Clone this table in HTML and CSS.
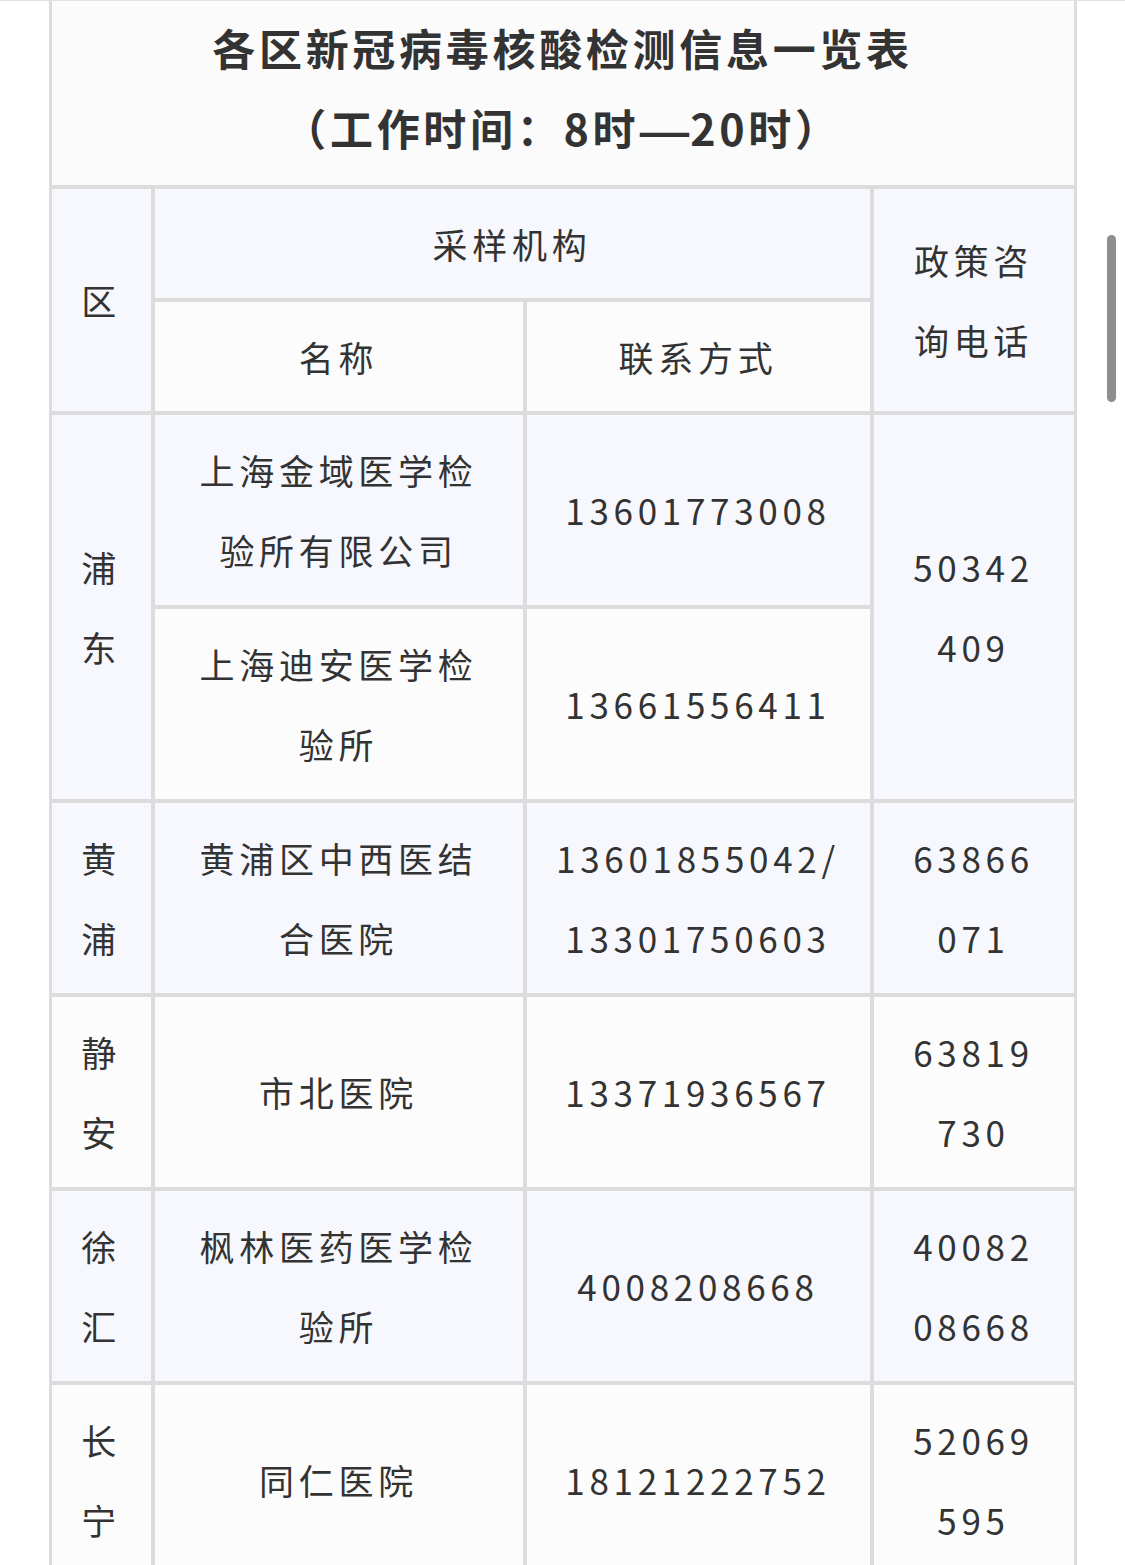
FILE: index.html
```html
<!DOCTYPE html>
<html lang="zh-CN">
<head>
<meta charset="utf-8">
<title>各区新冠病毒核酸检测信息一览表</title>
<link rel="stylesheet" href="styles.css">
</head>
<body>
<div class="page">
  <table class="info-table">
    <colgroup>
      <col class="col-district">
      <col class="col-name">
      <col class="col-phone">
      <col class="col-policy">
    </colgroup>
    <tr class="row-title">
      <td colspan="4" class="title">各区新冠病毒核酸检测信息一览表<br>（工作时间：8时<span class="dash">—</span>20时）</td>
    </tr>
    <tr class="row-a head">
      <td rowspan="2" class="district">区</td>
      <td colspan="2">采样机构</td>
      <td rowspan="2" class="policy">政策咨询电话</td>
    </tr>
    <tr class="row-b head">
      <td class="name">名称</td>
      <td class="phone">联系方式</td>
    </tr>
    <tr class="row-a">
      <td rowspan="2" class="district">浦东</td>
      <td class="name">上海金域医学检验所有限公司</td>
      <td class="phone">13601773008</td>
      <td rowspan="2" class="policy">50342409</td>
    </tr>
    <tr class="row-b">
      <td class="name">上海迪安医学检验所</td>
      <td class="phone">13661556411</td>
    </tr>
    <tr class="row-a">
      <td class="district">黄浦</td>
      <td class="name">黄浦区中西医结合医院</td>
      <td class="phone">13601855042/<wbr>13301750603</td>
      <td class="policy">63866071</td>
    </tr>
    <tr class="row-b">
      <td class="district">静安</td>
      <td class="name">市北医院</td>
      <td class="phone">13371936567</td>
      <td class="policy">63819730</td>
    </tr>
    <tr class="row-a">
      <td class="district">徐汇</td>
      <td class="name">枫林医药医学检验所</td>
      <td class="phone">4008208668</td>
      <td class="policy">4008208668</td>
    </tr>
    <tr class="row-b">
      <td class="district">长宁</td>
      <td class="name">同仁医院</td>
      <td class="phone">18121222752</td>
      <td class="policy">52069595</td>
    </tr>
  </table>
</div>
<div class="scrollbar"></div>
</body>
</html>
```
FILE: styles.css
```css
html, body {
  margin: 0;
  padding: 0;
  background: #ffffff;
  overflow: hidden;
}

body {
  font-family: "Noto Sans CJK SC", "Noto Sans", sans-serif;
  color: #333333;
}

.page {
  border-top: 1px solid #e2e2e2;
}

.info-table {
  width: 1028px;
  margin: 0 auto;
  table-layout: fixed;
  border-collapse: separate;
  border-spacing: 0;
  border: 1px solid #dcdcdc;
  border-top: none;
}

.col-district { width: 103px; }
.col-name { width: 372px; }
.col-phone { width: 347px; }
.col-policy { width: 204px; }

.info-table td {
  border: 2px solid #dcdcdc;
  text-align: center;
  vertical-align: middle;
  font-size: 35px;
  letter-spacing: 4.7px;
  line-height: 80px;
  padding: 15px 10px;
}

.row-a td { background: #f7f8fd; }
.row-b td { background: #fcfcfc; }

.info-table .head td {
  padding-top: 14.5px;
  padding-bottom: 14.5px;
}

.info-table td.title {
  background: #fbfbfb;
  border-top: none;
  font-size: 43px;
  letter-spacing: 3.7px;
  font-weight: 700;
  padding: 6px 10px 18px;
}

.dash {
  font-family: "Liberation Sans", "Noto Sans", sans-serif;
  font-weight: 700;
  letter-spacing: 0;
  line-height: 1;
  display: inline-block;
  transform: scaleX(1.15);
  margin: 0 4px;
}

.info-table td.district {
  padding-left: 25px;
  padding-right: 25px;
}

.info-table td.name {
  padding-left: 34px;
  padding-right: 34px;
}

.info-table td.policy {
  padding-left: 32px;
  padding-right: 32px;
  word-break: break-all;
}

.scrollbar {
  position: fixed;
  left: 1107px;
  top: 235px;
  width: 9px;
  height: 167px;
  border-radius: 5px;
  background: #8e8e8e;
}
```
